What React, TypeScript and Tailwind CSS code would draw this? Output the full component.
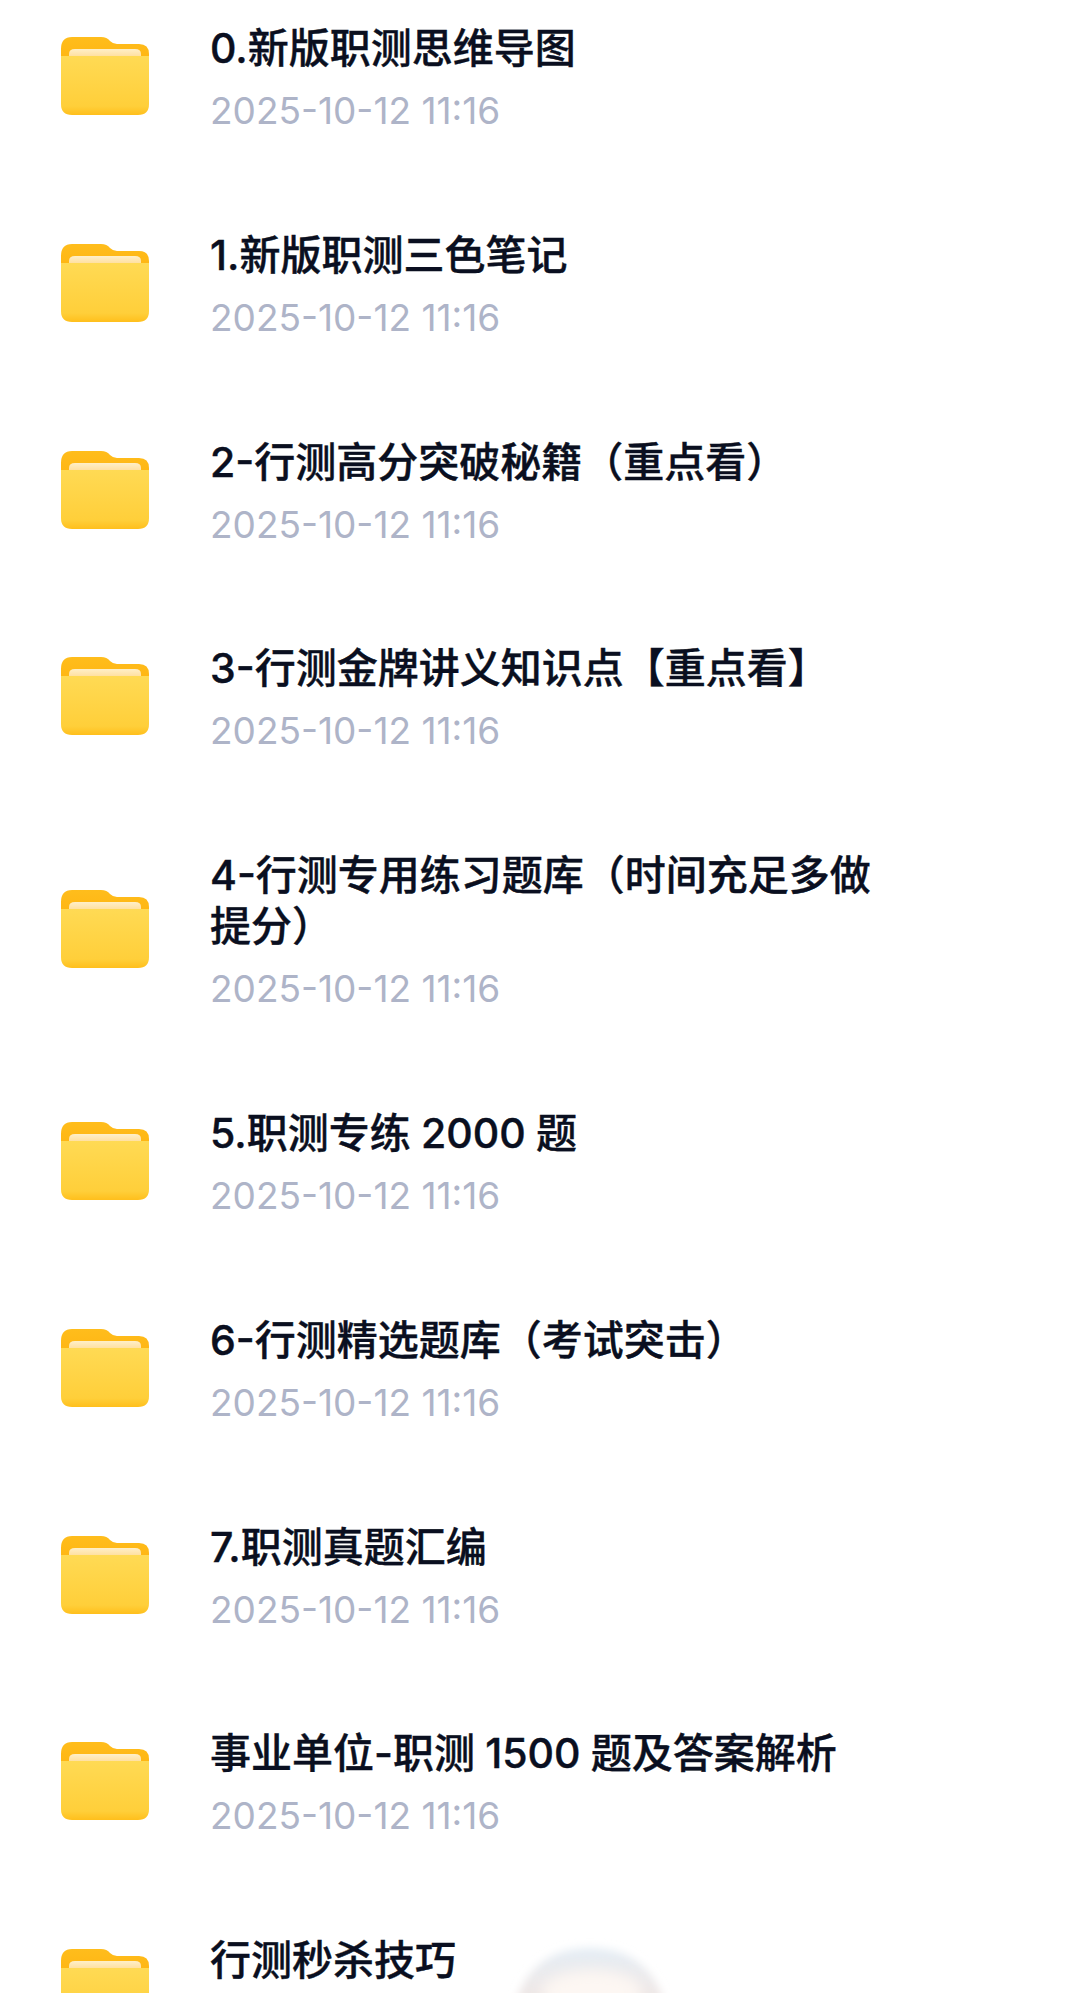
const rows = [
  "0.新版职测思维导图",
  "1.新版职测三色笔记",
  "2-行测高分突破秘籍（重点看）",
  "3-行测金牌讲义知识点【重点看】",
  "4-行测专用练习题库（时间充足多做提分）",
  "5.职测专练\u20052000\u2005题",
  "6-行测精选题库（考试突击）",
  "7.职测真题汇编",
  "事业单位-职测\u20051500\u2005题及答案解析",
  "行测秒杀技巧",
];

function Folder() {
  return (
    <svg width="90" height="80" viewBox="0 0 90 80" className="mb-[3px] shrink-0">
      <defs>
        <linearGradient id="fb" x1="0" y1="0" x2="0" y2="1">
          <stop offset="0" stopColor="#ffbd1c" />
          <stop offset="1" stopColor="#ffb00c" />
        </linearGradient>
        <linearGradient id="ff" x1="0" y1="0" x2="0" y2="1">
          <stop offset="0" stopColor="#ffda54" />
          <stop offset="0.85" stopColor="#ffcf3a" />
          <stop offset="1" stopColor="#ffbf1c" />
        </linearGradient>
        <linearGradient id="fp" x1="0" y1="0" x2="0" y2="1">
          <stop offset="0" stopColor="#ffefc8" />
          <stop offset="1" stopColor="#ffd88c" />
        </linearGradient>
      </defs>
      <path d="M1 13 Q1 1 12 1 H41 Q47 1 50 5 Q53 8 57 8 H79 Q89 8 89 18 V40 H1 Z" fill="url(#fb)" />
      <path d="M9 18 Q9 13 15 13 H75 Q81 13 81 18 V24 H9 Z" fill="url(#fp)" />
      <path d="M1 20 H89 V68 Q89 79 78 79 H12 Q1 79 1 68 Z" fill="url(#ff)" />
    </svg>
  );
}

export default function App() {
  return (
    <div className="relative h-[1993px] w-[1080px] overflow-hidden bg-white font-['Inter','Noto_Sans_CJK_SC',sans-serif]">
      <div className="flex flex-col gap-[97.8px] pt-[23px]">
        {rows.map((t) => (
          <div key={t} className="flex items-center pl-[60px]">
            <Folder />
            <div className="ml-[60px] w-[680px]">
              <div className="text-[41px] font-medium leading-[51px] text-[#0a0f20] [-webkit-text-stroke:0.4px_#0a0f20]">{t}</div>
              <div className="mt-[16px] text-[37px] leading-[42px] text-[#aeb4c8]">2025-10-12 11:16</div>
            </div>
          </div>
        ))}
      </div>
      <svg className="absolute left-[500px] top-[1930px]" width="180" height="63" viewBox="0 0 180 63">
        <defs>
          <filter id="bl" x="-20%" y="-20%" width="140%" height="140%"><feGaussianBlur stdDeviation="4" /></filter>
          <filter id="bl2" x="-30%" y="-30%" width="160%" height="160%"><feGaussianBlur stdDeviation="7" /></filter>
          <linearGradient id="dm" x1="0" y1="0" x2="0" y2="1">
            <stop offset="0" stopColor="#e4edf5" />
            <stop offset="1" stopColor="#f2e6e2" />
          </linearGradient>
        </defs>
        <path d="M14 78 Q30 18 90 18 Q150 18 166 78 Z" fill="url(#dm)" filter="url(#bl)" />
        <ellipse cx="92" cy="62" rx="50" ry="22" fill="#fdf7f3" filter="url(#bl2)" />
      </svg>
    </div>
  );
}
